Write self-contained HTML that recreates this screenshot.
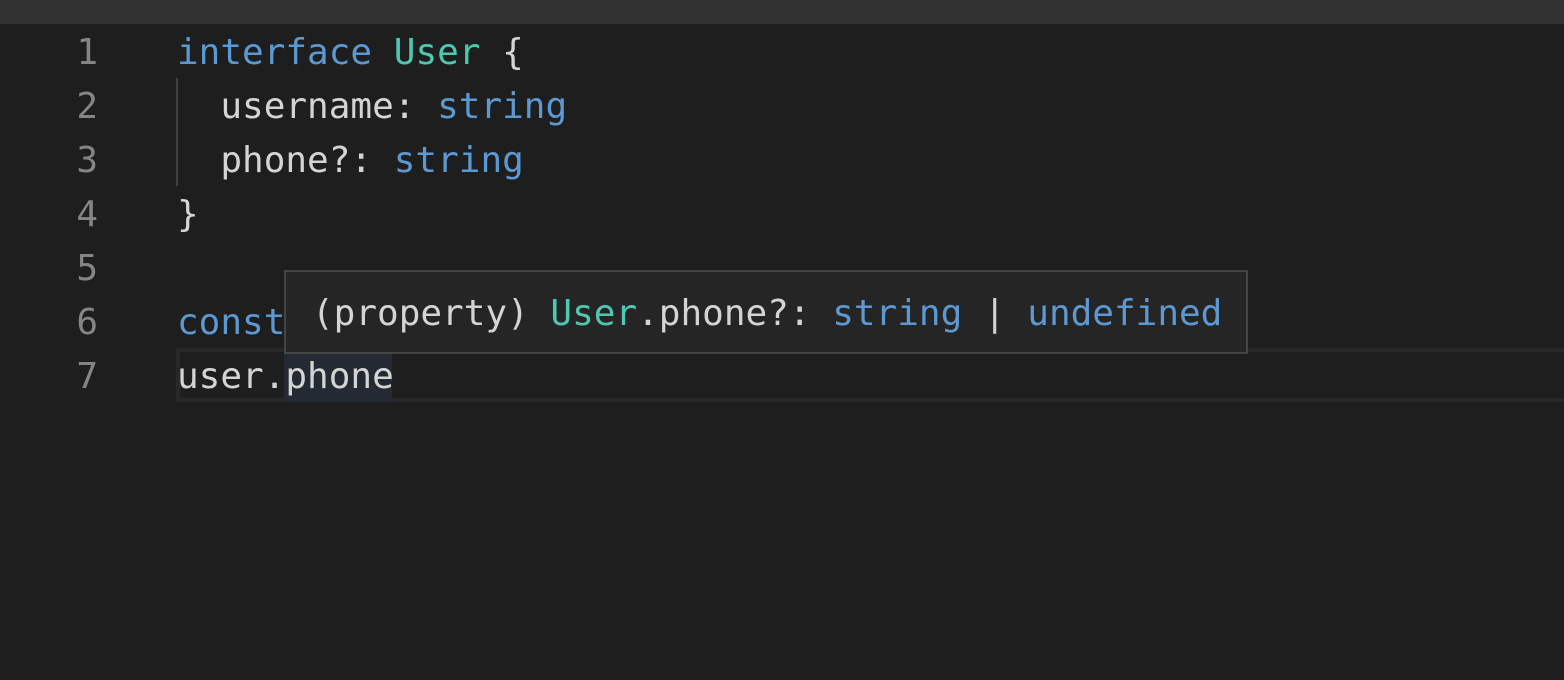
<!DOCTYPE html>
<html><head><meta charset="utf-8"><style>
body{margin:0;width:1564px;height:680px;background:#1e1e1e;overflow:hidden;position:relative;font-family:"DejaVu Sans Mono","Liberation Mono",monospace;font-size:36px;}
.top{position:absolute;left:0;top:0;width:1564px;height:24px;background:#323232;}
.ln{position:absolute;left:0;width:98px;text-align:right;color:#858585;height:54px;line-height:54px;margin-top:2px;}
.code{position:absolute;left:177px;height:54px;line-height:54px;color:#d4d4d4;white-space:pre;margin-top:2px;}
.k{color:#5c98d2}.t{color:#4ec9b0}
.guide{position:absolute;left:176px;top:78px;width:2px;height:108px;background:#404040;}
.cur{position:absolute;left:176px;top:348px;width:1400px;height:54px;box-sizing:border-box;border:4px solid #282828;}
.hl{position:absolute;left:284px;top:354px;width:108px;height:48px;background:#232a33;}
.tip{position:absolute;left:284px;top:270px;width:964px;height:84px;box-sizing:border-box;background:#252526;border:2px solid #454545;}
.tip span.txt{position:absolute;left:26px;top:15px;line-height:54px;white-space:pre;color:#d4d4d4;}
</style></head><body>
<div class="top"></div>
<div class="cur"></div>
<div class="hl"></div>
<div class="guide"></div>
<div class="ln" style="top:24px">1</div>
<div class="ln" style="top:78px">2</div>
<div class="ln" style="top:132px">3</div>
<div class="ln" style="top:186px">4</div>
<div class="ln" style="top:240px">5</div>
<div class="ln" style="top:294px">6</div>
<div class="ln" style="top:348px">7</div>
<div class="code" style="top:24px"><span class="k">interface</span> <span class="t">User</span> {</div>
<div class="code" style="top:78px">  username: <span class="k">string</span></div>
<div class="code" style="top:132px">  phone?: <span class="k">string</span></div>
<div class="code" style="top:186px">}</div>
<div class="code" style="top:294px"><span class="k">const</span></div>
<div class="code" style="top:348px">user.phone</div>
<div class="tip"><span class="txt">(property) <span class="t">User</span>.phone?: <span class="k">string</span> | <span class="k">undefined</span></span></div>
</body></html>
